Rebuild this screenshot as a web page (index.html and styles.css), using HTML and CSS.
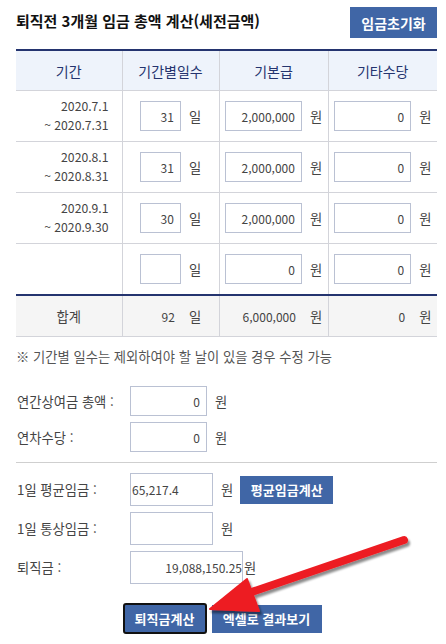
FILE: index.html
```html
<!DOCTYPE html>
<html lang="ko">
<head>
    <meta charset="UTF-8">
    <meta name="viewport" content="width=device-width, initial-scale=1.0">
    <title>퇴직금 계산</title>
    <link rel="stylesheet" href="styles.css">
</head>
<body>

    <div class="wrap">

        <div class="title-bar">
            <h2>퇴직전 3개월 임금 총액 계산(세전금액)</h2>
            <button class="btn">임금초기화</button>
        </div>

        <table class="pay-table">
            <colgroup>
                <col class="col-period">
                <col class="col-days">
                <col class="col-pay">
                <col class="col-pay">
            </colgroup>
            <thead>
                <tr>
                    <th>기간</th>
                    <th>기간별일수</th>
                    <th>기본급</th>
                    <th>기타수당</th>
                </tr>
            </thead>
            <tbody>
                <tr>
                    <td class="period">2020.7.1<br>~ 2020.7.31</td>
                    <td><div class="field"><input class="in-days" value="31"><span>일</span></div></td>
                    <td><div class="field"><input class="in-pay" value="2,000,000"><span>원</span></div></td>
                    <td><div class="field"><input class="in-pay" value="0"><span>원</span></div></td>
                </tr>
                <tr>
                    <td class="period">2020.8.1<br>~ 2020.8.31</td>
                    <td><div class="field"><input class="in-days" value="31"><span>일</span></div></td>
                    <td><div class="field"><input class="in-pay" value="2,000,000"><span>원</span></div></td>
                    <td><div class="field"><input class="in-pay" value="0"><span>원</span></div></td>
                </tr>
                <tr>
                    <td class="period">2020.9.1<br>~ 2020.9.30</td>
                    <td><div class="field"><input class="in-days" value="30"><span>일</span></div></td>
                    <td><div class="field"><input class="in-pay" value="2,000,000"><span>원</span></div></td>
                    <td><div class="field"><input class="in-pay" value="0"><span>원</span></div></td>
                </tr>
                <tr>
                    <td class="period"></td>
                    <td><div class="field"><input class="in-days" value=""><span>일</span></div></td>
                    <td><div class="field"><input class="in-pay" value="0"><span>원</span></div></td>
                    <td><div class="field"><input class="in-pay" value="0"><span>원</span></div></td>
                </tr>
            </tbody>
            <tfoot>
                <tr>
                    <td class="sum-label">합계</td>
                    <td><div class="field"><span class="sum-days">92</span><span>일</span></div></td>
                    <td><div class="field"><span class="sum-pay">6,000,000</span><span>원</span></div></td>
                    <td><div class="field"><span class="sum-pay">0</span><span>원</span></div></td>
                </tr>
            </tfoot>
        </table>

        <p class="note">※ 기간별 일수는 제외하여야 할 날이 있을 경우 수정 가능</p>

        <div class="form-rows">
            <div class="row">
                <label>연간상여금 총액 :</label>
                <input class="in-sm" value="0">
                <span class="unit">원</span>
            </div>
            <div class="row">
                <label>연차수당 :</label>
                <input class="in-sm" value="0">
                <span class="unit">원</span>
            </div>
        </div>

        <hr class="divider">

        <div class="form-rows result">
            <div class="row">
                <label>1일 평균임금 :</label>
                <input class="in-md left" value="65,217.4">
                <span class="unit">원</span>
                <button class="btn small">평균임금계산</button>
            </div>
            <div class="row">
                <label>1일 통상임금 :</label>
                <input class="in-md" value="">
                <span class="unit">원</span>
            </div>
            <div class="row">
                <label>퇴직금 :</label>
                <input class="in-lg" value="19,088,150.25">
                <span class="unit tight">원</span>
            </div>
        </div>

        <div class="actions">
            <button class="btn active">퇴직금계산</button>
            <button class="btn">엑셀로 결과보기</button>
        </div>

    </div>

    <!-- 강조 화살표 -->
    <svg class="arrow" width="446" height="644" viewBox="0 0 446 644">
        <defs>
            <filter id="shadow" x="-10%" y="-10%" width="130%" height="130%">
                <feDropShadow dx="2" dy="3" stdDeviation="1.2" flood-color="#000" flood-opacity="0.45"/>
            </filter>
        </defs>
        <g filter="url(#shadow)" fill="#ed1c24" stroke="#ed1c24">
            <line x1="404" y1="540" x2="240" y2="596" stroke-width="8" stroke-linecap="round"/>
            <polygon points="210,609 247,579 259,611" stroke-width="2" stroke-linejoin="round"/>
        </g>
    </svg>

</body>
</html>
```

FILE: styles.css
```css
:root {
    --blue: #4066a6;
    --navy: #24346f;
    --line: #d3d4da;
    --input-border: #bac1d3;
    --text: #444;
}

body {
    margin: 0;
    font-family: "Noto Sans CJK KR", "Noto Sans", sans-serif;
    font-size: 13.3px;
    color: var(--text);
    background: #fff;
}

.wrap {
    width: 421px;
    padding: 7px 0 0 16px;
}

input {
    font-family: inherit;
    font-size: 12px;
    color: #444;
    box-sizing: border-box;
    border: 1px solid var(--input-border);
    padding: 0 6px;
    text-align: right;
    background: #fff;
    outline: none;
}

.btn {
    font-family: inherit;
    font-size: 13px;
    font-weight: bold;
    color: #fff;
    background: var(--blue);
    border: none;
    height: 28px;
    padding: 0 10px;
    cursor: pointer;
}

/* 제목 */
.title-bar {
    display: flex;
    justify-content: space-between;
    align-items: center;
    height: 31px;
    margin-bottom: 11px;
}

.title-bar h2 {
    margin: -4px 0 0 0;
    font-size: 15px;
    color: #111;
}

.title-bar .btn {
    height: 31px;
    width: 87px;
    padding: 0;
    font-size: 14px;
}

/* 테이블 */
.pay-table {
    width: 421px;
    border-collapse: collapse;
    table-layout: fixed;
    border-top: 2px solid var(--navy);
}

.col-period { width: 106px; }
.col-days { width: 97px; }
.col-pay { width: 109px; }

.pay-table th {
    height: 39px;
    padding: 0;
    background: #eef3fb;
    color: var(--navy);
    font-weight: normal;
    font-size: 14px;
    border-left: 1px solid var(--line);
    border-bottom: 1px solid var(--line);
}

.pay-table td {
    height: 50px;
    padding: 0;
    border-left: 1px solid var(--line);
    border-bottom: 1px solid var(--line);
}

.pay-table th:first-child,
.pay-table td:first-child {
    border-left: none;
}

.pay-table td.period {
    text-align: right;
    padding-right: 13px;
    line-height: 19px;
    font-size: 12.2px;
    color: #444;
}

.field {
    display: flex;
    justify-content: center;
    align-items: center;
    gap: 8px;
}

.in-days {
    width: 41px;
    height: 30px;
}

.in-pay {
    width: 77px;
    height: 30px;
}

.pay-table tfoot td {
    height: 40px;
    background: #f5f5f5;
    border-top: 2px solid var(--navy);
}

.pay-table tfoot .sum-label {
    text-align: center;
}

.sum-days,
.sum-pay {
    padding-right: 6px;
    box-sizing: border-box;
    text-align: right;
    font-size: 12px;
}

.sum-days { width: 41px; }
.sum-pay { width: 77px; }

.note {
    margin: 10px 0 0;
    color: #555;
}

/* 입력 폼 */
.form-rows {
    display: flex;
    flex-direction: column;
    gap: 6px;
    margin-top: 20px;
}

.row {
    display: flex;
    align-items: center;
}

.row label {
    width: 113px;
    padding-left: 1px;
}

.row .unit {
    margin-left: 8px;
}

.row .unit.tight {
    margin-left: 1px;
}

.in-sm {
    width: 77px;
    height: 30px;
}

.in-md {
    width: 83px;
    height: 33px;
}

.in-md.left {
    text-align: left;
    padding-left: 1px;
}

.in-lg {
    width: 113px;
    height: 33px;
    padding-right: 0;
}

.btn.small {
    margin-left: 7px;
    width: 93px;
    padding: 0;
}

.divider {
    border: none;
    border-top: 1px solid #cfcfcf;
    margin: 10px 0 10px;
}

.result {
    margin-top: 0;
}

/* 하단 버튼 */
.actions {
    display: flex;
    justify-content: center;
    align-items: center;
    gap: 5px;
    margin-top: 19px;
    padding-right: 9px;
}

.actions .btn {
    height: 28px;
    width: 110px;
    padding: 0;
}

.actions .btn.active {
    width: 84px;
    height: 31px;
    border: 2px solid #111;
    border-radius: 3px;
}

.arrow {
    position: absolute;
    top: 0;
    left: 0;
    pointer-events: none;
}
```
